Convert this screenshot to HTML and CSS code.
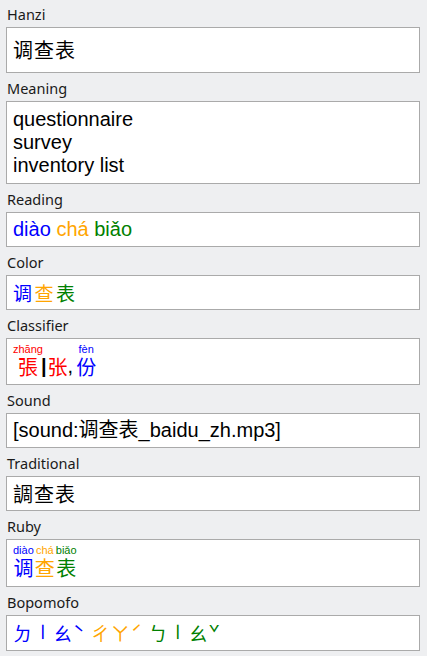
FILE: index.html
```html
<!DOCTYPE html>
<html lang="zh">
<head>
<meta charset="utf-8">
<title>Editor</title>
<link rel="stylesheet" href="styles.css">
</head>
<body>
<div class="fields">
  <div class="field">
    <div class="label">Hanzi</div>
    <div class="box hanzi tall">调查表</div>
  </div>
  <div class="field">
    <div class="label">Meaning</div>
    <div class="box latin multi">questionnaire<br>survey<br>inventory list</div>
  </div>
  <div class="field">
    <div class="label">Reading</div>
    <div class="box latin"><span class="t4">diào</span> <span class="t2">chá</span> <span class="t3">biǎo</span></div>
  </div>
  <div class="field">
    <div class="label">Color</div>
    <div class="box color"><span class="t4">调</span><span class="t2">查</span><span class="t3">表</span></div>
  </div>
  <div class="field">
    <div class="label">Classifier</div>
    <div class="box rubybox classifier"><ruby class="rb t1"><span class="base">張</span><rt>zhāng</rt></ruby><span class="bar">|</span><span class="plain t1">张</span><span class="comma">,</span><ruby class="rb t4 gap"><span class="base">份</span><rt>fèn</rt></ruby></div>
  </div>
  <div class="field">
    <div class="label">Sound</div>
    <div class="box latin">[sound:调查表_baidu_zh.mp3]</div>
  </div>
  <div class="field">
    <div class="label">Traditional</div>
    <div class="box hanzi">調查表</div>
  </div>
  <div class="field">
    <div class="label">Ruby</div>
    <div class="box rubybox"><ruby class="rb t4"><span class="base">调</span><rt>diào</rt></ruby><ruby class="rb t2"><span class="base">查</span><rt>chá</rt></ruby><ruby class="rb t3"><span class="base">表</span><rt>biǎo</rt></ruby></div>
  </div>
  <div class="field">
    <div class="label">Bopomofo</div>
    <div class="box bopo" lang="zh-TW"><span class="t4">ㄉ<span class="v">ㄧ</span>ㄠˋ</span> <span class="t2">ㄔㄚˊ</span> <span class="t3">ㄅ<span class="v">ㄧ</span>ㄠˇ</span></div>
  </div>
</div>
</body>
</html>
```

FILE: styles.css
```css
html, body {
  margin: 0;
  padding: 0;
  background: #eeeff1;
}

.fields {
  display: flex;
  flex-direction: column;
  padding: 0 7px 0 6px;
}

.label {
  font-family: "Noto Sans", "Open Sans", sans-serif;
  font-size: 14.5px;
  line-height: 22px;
  color: #1a1a1a;
  padding: 4px 1px 2px 1px;
}

.fields .field:first-child .label {
  padding-top: 3px;
}

.box {
  background: #fff;
  border: 1px solid #aaaaaa;
  padding: 5px 6px;
  color: #000;
  font-family: "Liberation Sans", Arial, "Noto Sans CJK SC", sans-serif;
  font-size: 20px;
  line-height: 23px;
}

.box.hanzi {
  font-family: "Noto Sans CJK SC", sans-serif;
  font-size: 20px;
  line-height: 23px;
  letter-spacing: 1px;
}

.box.tall {
  padding-top: 10px;
  padding-bottom: 11px;
}

.box.multi {
  padding-top: 6px;
  padding-bottom: 6px;
}

.box.color {
  font-family: "Noto Sans CJK SC", sans-serif;
  font-size: 19px;
  line-height: 23px;
  letter-spacing: 2.5px;
}

.box.rubybox {
  display: flex;
  align-items: flex-end;
  font-family: "Noto Sans CJK SC", sans-serif;
  font-size: 20px;
  line-height: 23px;
  padding: 4px 6px 7px 6px;
}

.box.classifier {
  padding-bottom: 6px;
}

.rb {
  display: inline-flex;
  flex-direction: column-reverse;
  align-items: center;
  margin-right: 1px;
}

.rb rt {
  display: block;
  font-family: "Liberation Sans", Arial, sans-serif;
  font-size: 11px;
  line-height: 12px;
}

.rb .base {
  display: block;
}

.classifier .rb {
  margin-right: 2px;
}

.rb.gap {
  margin-left: 3px;
}

.bar {
  font-family: "Liberation Sans", Arial, sans-serif;
  color: #000;
  font-weight: bold;
  margin-left: -4px;
  margin-right: 1px;
}

.plain {
  display: block;
}

.comma {
  font-family: "Liberation Sans", Arial, sans-serif;
  color: #000;
}

.box.bopo {
  font-family: "Noto Sans CJK TC", "Noto Sans CJK SC", sans-serif;
  font-size: 19px;
  line-height: 24px;
  letter-spacing: 1px;
}

.box.bopo .v {
  display: inline-block;
  line-height: 19px;
  transform: rotate(90deg);
}

.t1 { color: #ff0000; }
.t2 { color: #ffa500; }
.t3 { color: #008000; }
.t4 { color: #0000ff; }
```
